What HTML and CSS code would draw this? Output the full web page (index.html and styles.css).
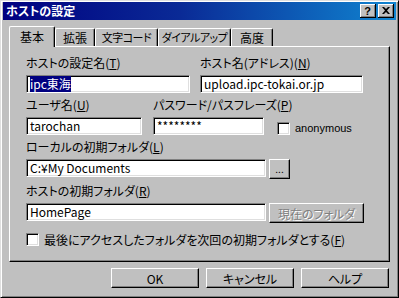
FILE: index.html
```html
<!DOCTYPE html>
<html lang="ja">
<head>
  <meta charset="UTF-8">
  <title>ホストの設定</title>
  <link rel="stylesheet" href="styles.css">
</head>
<body>
  <div class="window">
    <div class="titlebar">
      <span class="title">ホストの設定</span>
      <div class="title-buttons">
        <span class="tbtn">?</span>
        <span class="tbtn">
          <svg width="8" height="7" viewBox="0 0 8 7"><path d="M0 0h2l2 2 2-2h2L5 3.5 8 7H6L4 5 2 7H0l3-3.5z" fill="#000"/></svg>
        </span>
      </div>
    </div>

    <div class="tabs">
      <div class="tab active t-basic">基本</div>
      <div class="tab t-ext">拡張</div>
      <div class="tab t-code narrow">文字コード</div>
      <div class="tab t-dial narrow">ダイアルアップ</div>
      <div class="tab t-adv">高度</div>
    </div>

    <div class="panel">
      <div class="row">
        <div class="field w164">
          <label>ホストの設定名(<u>T</u>)</label>
          <div class="input"><span class="sel">ipc東海</span></div>
        </div>
        <div class="field w163 col2">
          <label>ホスト名(アドレス)(<u>N</u>)</label>
          <div class="input">upload.ipc-tokai.or.jp</div>
        </div>
      </div>

      <div class="row">
        <div class="field w116">
          <label>ユーザ名(<u>U</u>)</label>
          <div class="input">tarochan</div>
        </div>
        <div class="field w111 col-pw">
          <label>パスワード/パスフレーズ(<u>P</u>)</label>
          <div class="input">********</div>
        </div>
        <div class="check anon">
          <span class="box"></span>
          <span class="anon-text">anonymous</span>
        </div>
      </div>

      <div class="field">
        <label>ローカルの初期フォルダ(<u>L</u>)</label>
        <div class="line">
          <div class="input w239">C:¥My Documents</div>
          <div class="btn small">...</div>
        </div>
      </div>

      <div class="field">
        <label>ホストの初期フォルダ(<u>R</u>)</label>
        <div class="line">
          <div class="input w239">HomePage</div>
          <div class="btn wide disabled">現在のフォルダ</div>
        </div>
      </div>

      <div class="check last">
        <span class="box"></span>
        <span>最後にアクセスしたフォルダを次回の初期フォルダとする(<u>F</u>)</span>
      </div>
    </div>

    <div class="actions">
      <div class="btn action">OK</div>
      <div class="btn action">キャンセル</div>
      <div class="btn action">ヘルプ</div>
    </div>
  </div>
</body>
</html>
```

FILE: styles.css
```css
* {
  margin: 0;
  padding: 0;
  box-sizing: border-box;
}

body {
  background: #c0c0c0;
  font-family: "Noto Sans CJK JP", "Noto Sans", sans-serif;
  font-size: 12px;
  font-feature-settings: "palt";
  color: #000;
}

u {
  text-decoration: underline;
  text-underline-offset: 1px;
}

.window {
  width: 399px;
  height: 298px;
  background: #c0c0c0;
  border-left: 1px solid #dfdfdf;
  border-top: 1px solid #dfdfdf;
  border-right: 1px solid #000;
  border-bottom: 1px solid #000;
  box-shadow: inset 1px 1px 0 #fff, inset -1px -1px 0 #808080;
  padding: 1px 2px 2px 2px;
}

.titlebar {
  height: 18px;
  display: flex;
  align-items: center;
  justify-content: space-between;
  background: linear-gradient(90deg, #000080 0%, #0a2a96 45%, #1084d0 100%);
  padding: 0 2px 0 3px;
}

.title {
  color: #fff;
  font-weight: bold;
  font-size: 12px;
  line-height: 14px;
}

.title-buttons {
  display: flex;
  gap: 2px;
}

.tbtn {
  width: 16px;
  height: 14px;
  background: #c0c0c0;
  border-right: 1px solid #000;
  border-bottom: 1px solid #000;
  box-shadow: inset 1px 1px 0 #fff, inset -1px -1px 0 #808080;
  display: flex;
  align-items: center;
  justify-content: center;
  font-family: "Liberation Sans", sans-serif;
  font-weight: bold;
  font-size: 11px;
  line-height: 12px;
}

.tabs {
  display: flex;
  align-items: flex-end;
  margin: 6px 0 0 6px;
  height: 20px;
  position: relative;
  z-index: 1;
}

.tab {
  height: 18px;
  line-height: 17px;
  display: flex;
  justify-content: center;
  white-space: nowrap;
  border-left: 1px solid #fff;
  border-top: 1px solid #fff;
  border-right: 1px solid #000;
  box-shadow: inset -1px 0 0 #808080;
  border-radius: 2px 2px 0 0;
  background: #c0c0c0;
}

.tab.narrow {
  font-size: 11px;
  letter-spacing: -0.5px;
}

.tab.active {
  height: 21px;
  line-height: 19px;
  margin-bottom: -1px;
}

.t-basic { width: 46px; }
.t-ext { width: 40px; }
.t-code { width: 63px; }
.t-dial { width: 73px; }
.t-adv { width: 42px; }

.panel {
  width: 381px;
  height: 216px;
  margin-left: 6px;
  border-left: 1px solid #fff;
  border-top: 1px solid #fff;
  border-right: 1px solid #000;
  border-bottom: 1px solid #000;
  box-shadow: inset -1px -1px 0 #808080;
  padding: 8px 0 0 16px;
}

.row {
  display: flex;
  align-items: flex-start;
}

.field label {
  display: block;
  height: 16px;
  line-height: 16px;
  margin-bottom: 4px;
  white-space: nowrap;
}

.field {
  margin-bottom: 4px;
}

.col2 {
  margin-left: 10px;
}

.col-pw {
  margin-left: 11px;
}

.w164 { width: 164px; }
.w163 { width: 163px; }
.w116 { width: 116px; }
.w111 { width: 111px; }
.w239 { width: 240px; }

.input {
  height: 18px;
  background: #fff;
  border-left: 1px solid #808080;
  border-top: 1px solid #808080;
  border-right: 1px solid #fff;
  border-bottom: 1px solid #fff;
  box-shadow: inset 1px 1px 0 #000, inset -1px -1px 0 #dfdfdf;
  padding: 0 3px;
  line-height: 16px;
  white-space: nowrap;
  overflow: hidden;
}

.sel {
  background: #000080;
  color: #fff;
}

.line {
  display: flex;
  gap: 3px;
}

.btn {
  background: #c0c0c0;
  border-left: 1px solid #fff;
  border-top: 1px solid #fff;
  border-right: 1px solid #000;
  border-bottom: 1px solid #000;
  box-shadow: inset -1px -1px 0 #808080;
  display: flex;
  align-items: center;
  justify-content: center;
  white-space: nowrap;
}

.btn.small {
  width: 21px;
  height: 20px;
  font-size: 10px;
  line-height: 10px;
}

.btn.wide {
  width: 95px;
  height: 20px;
}

.btn.disabled {
  color: #808080;
  text-shadow: 1px 1px 0 #fff;
}

.check {
  display: flex;
  align-items: center;
  gap: 5px;
  white-space: nowrap;
  height: 16px;
}

.box {
  width: 13px;
  height: 13px;
  flex: none;
  background: #fff;
  border-left: 1px solid #808080;
  border-top: 1px solid #808080;
  border-right: 1px solid #fff;
  border-bottom: 1px solid #fff;
  box-shadow: inset 1px 1px 0 #000, inset -1px -1px 0 #dfdfdf;
}

.anon {
  margin: 23px 0 0 13px;
}

.anon-text {
  font-family: "Liberation Sans", sans-serif;
  font-size: 11px;
}

.last {
  margin-top: 8px;
}

.actions {
  display: flex;
  justify-content: flex-end;
  gap: 7px;
  margin: 6px 7px 0 0;
}

.btn.action {
  width: 88px;
  height: 20px;
}
```
